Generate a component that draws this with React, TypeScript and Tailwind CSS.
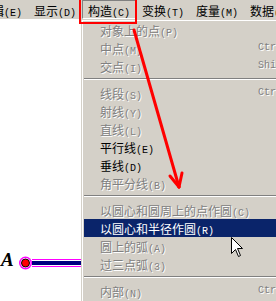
import React from "react";

type Item = { t: string; k: string; d?: boolean; h?: boolean; s?: string };

const sections: Item[][] = [
  [
    { t: "对象上的点", k: "P", d: true },
    { t: "中点", k: "M", d: true, s: "Ctrl+M" },
    { t: "交点", k: "I", d: true, s: "Shift+Ctrl+I" },
  ],
  [
    { t: "线段", k: "S", d: true, s: "Ctrl+L" },
    { t: "射线", k: "Y", d: true },
    { t: "直线", k: "L", d: true },
    { t: "平行线", k: "E" },
    { t: "垂线", k: "D" },
    { t: "角平分线", k: "B", d: true },
  ],
  [
    { t: "以圆心和圆周上的点作圆", k: "C", d: true },
    { t: "以圆心和半径作圆", k: "R", h: true },
    { t: "圆上的弧", k: "A", d: true },
    { t: "过三点弧", k: "3", d: true },
  ],
  [{ t: "内部", k: "N", d: true, s: "Ctrl+P" }],
];

const bar = [
  { t: "编辑", k: "E" },
  { t: "显示", k: "D" },
  { t: "构造", k: "C", p: true },
  { t: "变换", k: "T" },
  { t: "度量", k: "M" },
  { t: "数据", k: "A" },
];

function Label({ t, k }: { t: string; k: string }) {
  return (
    <span className="whitespace-nowrap">
      <span className="font-['Noto_Sans_CJK_SC',sans-serif] text-[12px]">{t}</span>
      <span className="font-['Liberation_Mono',monospace] text-[10px]">({k})</span>
    </span>
  );
}

function Row({ it }: { it: Item }) {
  const color = it.h
    ? "bg-[#0a246a] text-white"
    : it.d
    ? "text-[#808080] [text-shadow:1px_1px_0_#ffffff]"
    : "text-black";
  return (
    <div className={`grid h-[18px] grid-cols-[158px_1fr] items-center pl-[16px] leading-none ${color}`}>
      <Label t={it.t} k={it.k} />
      <span className="whitespace-nowrap font-['Liberation_Mono',monospace] text-[10px]">{it.s ?? ""}</span>
    </div>
  );
}

function Sep() {
  return (
    <div className="pt-[3px] pb-[4px]">
      <div className="h-px bg-[#808080]" />
      <div className="h-px bg-white" />
    </div>
  );
}

export default function App() {
  return (
    <div className="relative h-[301px] w-[276px] overflow-hidden bg-white">
      {/* menu bar */}
      <div className="flex h-[19px] items-center bg-[#d4d0c8] pl-0">
        <div className="-ml-[26px] flex h-full">
          {bar.map((b) => (
            <div
              key={b.t}
              className={
                b.p
                  ? "flex h-full w-[54px] items-center border-t border-l border-[#808080] border-r-white border-b-white border-r border-b pl-[5px] pt-[1px] text-black"
                  : "flex h-full w-[54px] items-center px-[6px] text-black"
              }
            >
              <Label t={b.t} k={b.k} />
            </div>
          ))}
        </div>
      </div>

      {/* canvas objects */}
      <div className="absolute left-[1px] top-[250px] font-['Liberation_Serif',serif] text-[19px] font-bold italic leading-none text-black">
        A
      </div>
      <svg className="absolute left-0 top-[250px]" width="90" height="26" viewBox="0 0 90 26">
        <rect x="32" y="9" width="58" height="1" fill="#ff00ff" />
        <rect x="32" y="11" width="58" height="4" fill="#000080" />
        <rect x="32" y="16" width="58" height="1" fill="#ff00ff" />
        <circle cx="25.5" cy="13" r="6.5" fill="#ff00ff" />
        <circle cx="25.5" cy="13" r="5" fill="#ffffff" />
        <circle cx="25.5" cy="13" r="4" fill="#ff0000" stroke="#000000" strokeWidth="1" />
      </svg>

      {/* dropdown menu */}
      <div className="absolute left-[81px] top-[19px] right-[-4px] bottom-[-4px] overflow-hidden border-t border-l border-[#d4d0c8] bg-[#d4d0c8]">
        <div className="h-full border-t border-l border-white pl-px">
          {sections.map((sec, i) => (
            <div key={i}>
              {i > 0 && <Sep />}
              {sec.map((it) => (
                <Row key={it.t} it={it} />
              ))}
            </div>
          ))}
        </div>
      </div>

      {/* red annotation box */}
      <div className="absolute left-[79px] top-[-2px] h-[26px] w-[58px] border-2 border-[#ff0000]" />

      {/* red arrow */}
      <svg className="absolute left-0 top-0" width="276" height="301" viewBox="0 0 276 301">
        <g stroke="#ff0000" strokeWidth="3" strokeLinecap="round" fill="none">
          <line x1="134" y1="30" x2="179" y2="187" />
          <line x1="179" y1="187" x2="182" y2="173" />
          <line x1="179" y1="187" x2="170" y2="176" />
        </g>
        {/* mouse cursor */}
        <path
          d="M231.5 237.5 L231.5 253.5 L235.5 249.5 L238.5 256.5 L240.5 255.5 L237.5 248.5 L242.5 248.5 Z"
          fill="#ffffff"
          stroke="#000000"
          strokeWidth="1"
        />
      </svg>
    </div>
  );
}
